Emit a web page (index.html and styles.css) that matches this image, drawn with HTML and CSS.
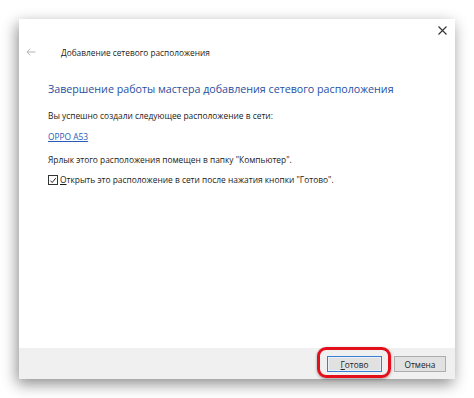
FILE: index.html
```html
<!DOCTYPE html>
<html lang="ru">

<head>
  <meta charset="UTF-8">
  <title>Добавление сетевого расположения</title>
  <link rel="stylesheet" href="styles.css">
</head>

<body>

  <div class="window">
    <div class="topbar">
      <span class="close">
        <svg width="9" height="9" viewBox="0 0 9 9">
          <path d="M0.5 0.5 L8.5 8.5 M8.5 0.5 L0.5 8.5" stroke="#333" stroke-width="1.1" fill="none" />
        </svg>
      </span>
    </div>

    <div class="header">
      <span class="back">
        <svg width="10" height="8" viewBox="0 0 10 8">
          <path d="M9.5 4 H1 M4.2 0.7 L0.9 4 L4.2 7.3" stroke="#b5b5b5" stroke-width="1" fill="none" />
        </svg>
      </span>
      <span class="title">Добавление сетевого расположения</span>
    </div>

    <div class="content">
      <h1 class="heading">Завершение работы мастера добавления сетевого расположения</h1>
      <p class="line">Вы успешно создали следующее расположение в сети:</p>
      <p class="line link-line"><a href="#" class="link">OPPO A53</a></p>
      <p class="line">Ярлык этого расположения помещен в папку "Компьютер".</p>
      <label class="line check-line">
        <span class="checkbox">
          <svg width="9" height="9" viewBox="0 0 9 9">
            <path d="M1.5 4.6 L3.6 6.8 L7.6 1.8" stroke="#222" stroke-width="1.1" fill="none" />
          </svg>
        </span>
        <span><u>О</u>ткрыть это расположение в сети после нажатия кнопки "Готово".</span>
      </label>
    </div>

    <div class="footer">
      <div class="btn-wrap">
        <button class="btn default"><u>Г</u>отово</button>
        <span class="highlight"></span>
      </div>
      <button class="btn">Отмена</button>
    </div>
  </div>

</body>

</html>
```

FILE: styles.css
```css
* {
  padding: 0;
  margin: 0;
  box-sizing: border-box;
}

html {
  height: 100%;
}

body {
  height: 100%;
  background-color: #fff;
  padding: 19px 0 0 19px;
  font-family: "Open Sans", "Noto Sans", sans-serif;
  font-size: 8.4px;
  color: #1a1a1a;
}

.window {
  width: 436px;
  height: 360px;
  background-color: #fff;
  box-shadow: -2px 5px 14px rgba(0, 0, 0, 0.45);
  display: flex;
  flex-direction: column;
}

.topbar {
  height: 22px;
  display: flex;
  justify-content: flex-end;
  align-items: center;
  padding-right: 8px;
}

.close {
  display: flex;
  padding-top: 1px;
}

.header {
  height: 22px;
  display: flex;
  align-items: center;
}

.back {
  display: flex;
  width: 42px;
  padding-left: 7px;
}

.title {
  font-size: 8.3px;
  color: #222;
}

.content {
  flex: 1;
  padding-left: 29px;
}

.heading {
  font-size: 10.7px;
  font-weight: normal;
  line-height: 18px;
  color: #27509f;
  margin-top: 17px;
  white-space: nowrap;
}

.line {
  display: block;
  line-height: 14px;
}

.heading + .line {
  margin-top: 11px;
}

.link-line {
  margin-top: 7px;
}

.link {
  color: #2a5ab8;
}

.link-line + .line {
  margin-top: 9px;
}

.check-line {
  margin-top: 6px;
  display: flex;
  align-items: center;
}

.checkbox {
  width: 10px;
  height: 10px;
  border: 1px solid #333;
  display: flex;
  align-items: center;
  justify-content: center;
  margin-right: 2px;
}

.footer {
  height: 31px;
  background-color: #f0f0f0;
  display: flex;
  justify-content: flex-end;
  align-items: flex-start;
  padding: 8px 9px 0 0;
  gap: 12px;
}

.btn-wrap {
  position: relative;
  display: flex;
}

.btn {
  width: 52px;
  height: 16px;
  background-color: #e1e1e1;
  border: 1px solid #adadad;
  font-family: "Open Sans", "Noto Sans", sans-serif;
  font-size: 8.3px;
  color: #222;
}

.btn.default {
  width: 55px;
  border-color: #3c7fd1;
  box-shadow: inset 0 0 0 1px #e9f0fa;
}

.highlight {
  position: absolute;
  top: -9px;
  left: -10px;
  right: -9px;
  bottom: -6px;
  border: 3px solid #e3101c;
  border-radius: 9px;
  box-shadow: 0 1px 3px rgba(0, 0, 0, 0.35);
}
```
